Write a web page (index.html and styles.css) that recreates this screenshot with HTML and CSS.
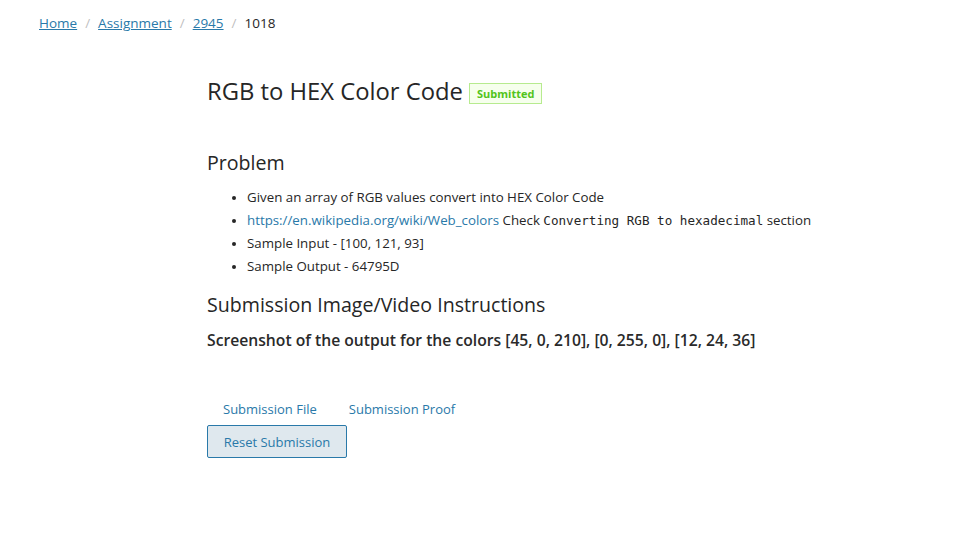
FILE: index.html
```html
<!DOCTYPE html>
<html lang="en">
<head>
<meta charset="utf-8">
<title>RGB to HEX Color Code</title>
<link rel="stylesheet" href="styles.css">
</head>
<body>
<nav class="breadcrumb">
  <a href="#">Home</a><span class="sep">/</span>
  <a href="#">Assignment</a><span class="sep">/</span>
  <a href="#">2945</a><span class="sep">/</span>
  <span class="current">1018</span>
</nav>
<main class="content">
  <div class="title-row">
    <h1 class="title">RGB to HEX Color Code</h1>
    <span class="tag">Submitted</span>
  </div>
  <h2 class="section-title problem">Problem</h2>
  <ul class="list">
    <li>Given an array of RGB values convert into HEX Color Code</li>
    <li><a href="#">https://en.wikipedia.org/wiki/Web_colors</a> Check <code>Converting RGB to hexadecimal</code> section</li>
    <li>Sample Input - [100, 121, 93]</li>
    <li>Sample Output - 64795D</li>
  </ul>
  <h2 class="section-title">Submission Image/Video Instructions</h2>
  <p class="instructions">Screenshot of the output for the colors [45, 0, 210], [0, 255, 0], [12, 24, 36]</p>
  <div class="tabs">
    <a href="#" class="tab">Submission File</a>
    <a href="#" class="tab">Submission Proof</a>
  </div>
  <button class="reset">Reset Submission</button>
</main>
</body>
</html>
```
FILE: styles.css
```css
body {
  margin: 0;
  font-family: "Open Sans", "Noto Sans", sans-serif;
  color: #262626;
  background: #fff;
}
a { color: #2979a9; }
.breadcrumb {
  padding: 13px 0 0 39px;
  font-size: 13.5px;
  line-height: 20px;
  color: #262626;
  display: flex;
  align-items: center;
}
.breadcrumb a { text-decoration: underline; }
.breadcrumb .sep { color: #bfbfbf; margin: 0 8px; }
.content {
  margin-left: 207px;
  padding-top: 42px;
}
.title-row {
  display: flex;
  align-items: center;
  gap: 6px;
}
.title {
  margin: 0;
  font-size: 23.8px;
  font-weight: 400;
  line-height: 32px;
}
.tag {
  font-size: 11px;
  font-weight: 700;
  color: #52c41a;
  background: #f6ffed;
  border: 1px solid #b7eb8f;
  padding: 0 7px;
  line-height: 19px;
  margin-top: 4px;
}
.section-title {
  margin: 0;
  font-size: 19.6px;
  font-weight: 400;
  line-height: 28px;
}
.problem { margin-top: 42px; }
.list {
  margin: 9px 0 14px;
  padding-left: 40px;
  font-size: 13.3px;
  line-height: 22.5px;
}
.list li::marker { font-size: 12px; }
.list a { text-decoration: none; }
code {
  font-family: "DejaVu Sans Mono", monospace;
  font-size: 12.6px;
}
.instructions {
  margin: 9px 0 0;
  font-size: 15.7px;
  font-weight: 600;
  line-height: 24px;
  color: #2a2a2a;
}
.tabs {
  margin-top: 46px;
  display: flex;
  gap: 0;
}
.tab {
  text-decoration: none;
  font-size: 13px;
  line-height: 22px;
  padding: 0 16px;
}
.reset {
  margin-top: 5px;
  font-family: inherit;
  font-size: 13px;
  color: #2979a9;
  background: #dfe8ee;
  border: 1px solid #2979a9;
  border-radius: 2px;
  width: 140px;
  height: 33px;
  padding: 0;
}
```
